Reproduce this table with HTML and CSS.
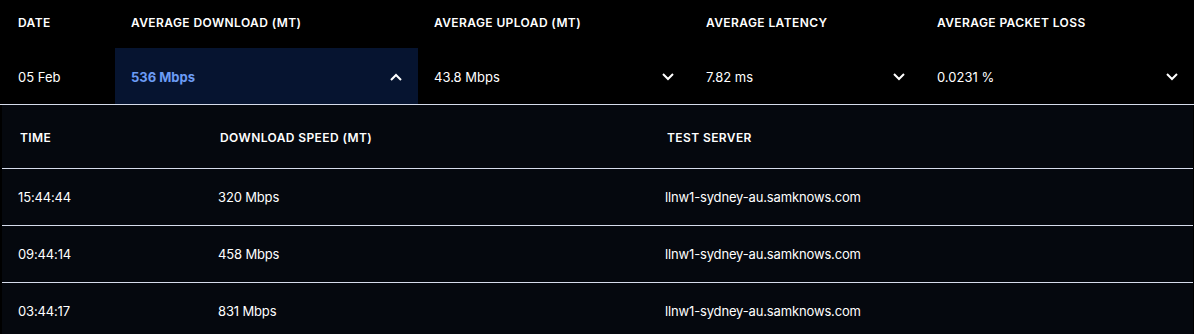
FILE: index.html
```html
<!DOCTYPE html>
<html lang="en">
<head>
<meta charset="utf-8">
<title>Results</title>
<link rel="stylesheet" href="styles.css">
</head>
<body>
<div class="summary">
  <div class="summary-head">
    <div class="cell head">Date</div>
    <div class="cell head">Average Download (MT)</div>
    <div class="cell head">Average Upload (MT)</div>
    <div class="cell head">Average Latency</div>
    <div class="cell head">Average Packet Loss</div>
  </div>
  <div class="summary-values">
    <div class="cell val">05 Feb</div>
    <div class="cell val active"><span>536 Mbps</span>
      <svg class="chev" viewBox="0 0 12 8" width="12" height="8"><path d="M1 7 L6 2 L11 7" fill="none" stroke="currentColor" stroke-width="2"/></svg>
    </div>
    <div class="cell val"><span>43.8 Mbps</span>
      <svg class="chev" viewBox="0 0 12 8" width="12" height="8"><path d="M1 1 L6 6 L11 1" fill="none" stroke="currentColor" stroke-width="2"/></svg>
    </div>
    <div class="cell val"><span>7.82 ms</span>
      <svg class="chev" viewBox="0 0 12 8" width="12" height="8"><path d="M1 1 L6 6 L11 1" fill="none" stroke="currentColor" stroke-width="2"/></svg>
    </div>
    <div class="cell val"><span>0.0231 %</span>
      <svg class="chev" viewBox="0 0 12 8" width="12" height="8"><path d="M1 1 L6 6 L11 1" fill="none" stroke="currentColor" stroke-width="2"/></svg>
    </div>
  </div>
</div>
<div class="details">
  <div class="drow dhead">
    <div class="dcell">Time</div>
    <div class="dcell">Download Speed (MT)</div>
    <div class="dcell">Test Server</div>
  </div>
  <div class="drow">
    <div class="dcell">15:44:44</div>
    <div class="dcell">320 Mbps</div>
    <div class="dcell">llnw1-sydney-au.samknows.com</div>
  </div>
  <div class="drow">
    <div class="dcell">09:44:14</div>
    <div class="dcell">458 Mbps</div>
    <div class="dcell">llnw1-sydney-au.samknows.com</div>
  </div>
  <div class="drow last">
    <div class="dcell">03:44:17</div>
    <div class="dcell">831 Mbps</div>
    <div class="dcell">llnw1-sydney-au.samknows.com</div>
  </div>
</div>
</body>
</html>
```
FILE: styles.css
```css
html, body {
  margin: 0;
  padding: 0;
  background: #000;
  color: #fff;
  font-family: Inter, "Noto Sans", sans-serif;
  font-size: 13px;
}

.summary-head,
.summary-values {
  display: grid;
  grid-template-columns: 115px 303px 272px 231px 1fr;
}

.summary-head {
  height: 48px;
}

.cell {
  display: flex;
  align-items: center;
  justify-content: space-between;
  padding: 0 16px 0 18px;
}

.cell:nth-child(n+2) {
  padding-left: 16px;
}

.head {
  font-size: 12px;
  font-weight: 600;
  text-transform: uppercase;
  letter-spacing: 0.4px;
  padding-bottom: 4px;
}

.summary-values {
  height: 56px;
  border-bottom: 1px solid #d6dceb;
}

.val {
  font-size: 13px;
  padding-top: 1px;
}

.chev {
  color: #fff;
  margin-right: 0;
}

.active {
  background: #061430;
  color: #6c9cf5;
  font-weight: 700;
}

.details {
  margin-left: 2px;
  margin-right: 1px;
  background: #05080e;
}

.drow {
  display: grid;
  grid-template-columns: 200px 447px 1fr;
  height: 56px;
  align-items: center;
  border-bottom: 1px solid #d6dceb;
  padding-left: 16px;
  letter-spacing: -0.15px;
}

.drow.last {
  border-bottom: none;
}

.dhead {
  height: 63px;
  font-size: 12px;
  font-weight: 600;
  text-transform: uppercase;
  letter-spacing: 0.4px;
  padding-left: 18px;
}

.dhead .dcell {
  padding-top: 2px;
}
```
